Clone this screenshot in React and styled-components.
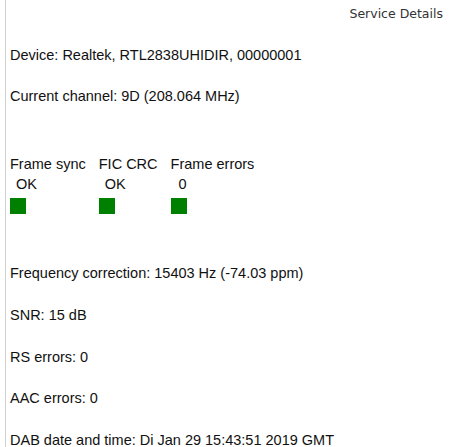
import React from "react";
import styled, { createGlobalStyle } from "styled-components";

const Global = createGlobalStyle`
  html, body {
    margin: 0;
    padding: 0;
    background: #ffffff;
  }
`;

const indicators = [
  { label: "Frame sync", value: "OK", indent: 6 },
  { label: "FIC CRC", value: "OK", indent: 6 },
  { label: "Frame errors", value: "0", indent: 8 },
];

const App = () => {
  return (
    <>
      <Global />
      <Panel>
        <Header>Service Details</Header>
        <Line top={25}>Device: Realtek, RTL2838UHIDIR, 00000001</Line>
        <Line top={24}>Current channel: 9D (208.064 MHz)</Line>
        <Indicators>
          {indicators.map((item) => (
            <Indicator key={item.label}>
              <Label>{item.label}</Label>
              <Value indent={item.indent}>{item.value}</Value>
              <Led />
            </Indicator>
          ))}
        </Indicators>
        <Line top={51}>Frequency correction: 15403 Hz (-74.03 ppm)</Line>
        <Line top={25}>SNR: 15 dB</Line>
        <Line top={25}>RS errors: 0</Line>
        <Line top={24}>AAC errors: 0</Line>
        <Line top={25}>DAB date and time: Di Jan 29 15:43:51 2019 GMT</Line>
      </Panel>
    </>
  );
};

const Panel = styled.div`
  display: flex;
  flex-direction: column;
  height: 447px;
  box-sizing: border-box;
  margin-left: 5px;
  padding-left: 4px;
  border-left: 1px solid #d0d0d0;
  font-family: "Liberation Sans", Arial, sans-serif;
  font-size: 14.5px;
  color: #111111;
  overflow: hidden;
`;

const Header = styled.div`
  align-self: flex-end;
  margin-top: 6px;
  margin-right: 31px;
  font-family: "DejaVu Sans", Tahoma, sans-serif;
  font-size: 12.5px;
  color: #333333;
  line-height: 16px;
`;

const Line = styled.div`
  margin-top: ${(p) => p.top}px;
  line-height: 17px;
  white-space: nowrap;
`;

const Indicators = styled.div`
  display: flex;
  gap: 13px;
  margin-top: 51px;
`;

const Indicator = styled.div`
  display: flex;
  flex-direction: column;
`;

const Label = styled.div`
  line-height: 17px;
`;

const Value = styled.div`
  padding-left: ${(p) => p.indent}px;
  margin-top: 3px;
  line-height: 17px;
`;

const Led = styled.div`
  width: 16px;
  height: 16px;
  margin-top: 5px;
  background: #008000;
`;

export default App;
